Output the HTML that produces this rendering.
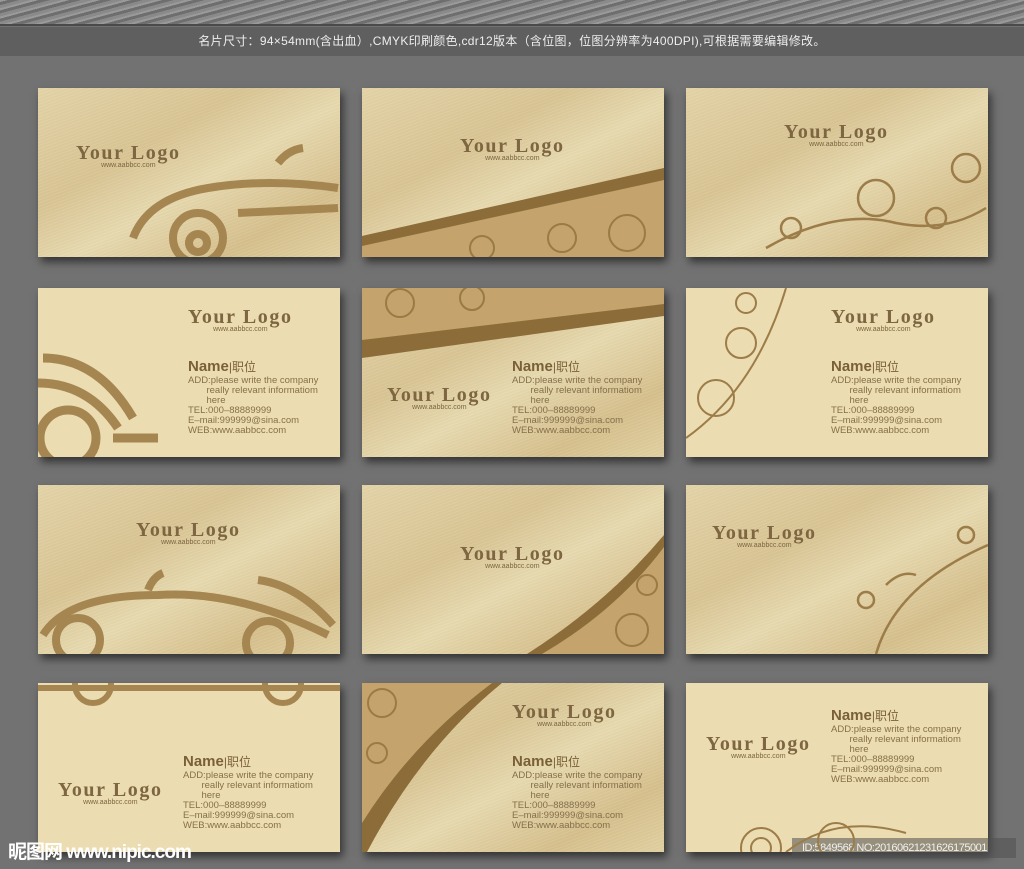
<!DOCTYPE html>
<html><head><meta charset="utf-8"><style>
*{margin:0;padding:0;box-sizing:border-box}
body{width:1024px;height:869px;background:#727272;position:relative;overflow:hidden;font-family:"Liberation Sans","Noto Sans CJK SC",sans-serif}
.top{position:absolute;left:0;top:0;width:1024px;height:26px;background:repeating-linear-gradient(165deg,#9a9a9a 0 2px,#6e6e6e 2px 5px,#8a8a8a 5px 8px);border-bottom:2px solid #4a4a4a}
.bar{position:absolute;left:0;top:27px;width:1024px;height:29px;background:#5f5f5f;color:#eee;font-size:12px;line-height:29px;text-align:center;letter-spacing:0.3px}
.c{position:absolute;width:302px;height:169px;box-shadow:3px 5px 8px rgba(0,0,0,.55);overflow:hidden}
.b{background:linear-gradient(150deg,#e4d4a8 0%,#d9c594 35%,#e8dab0 55%,#d6c08d 80%,#e2d1a2 100%)}
.b::after{content:"";position:absolute;inset:0;background:repeating-linear-gradient(160deg,rgba(255,255,255,.05) 0 1px,rgba(0,0,0,.015) 1px 3px)}
.p{background:#ecdcb1}
.lg{position:absolute;font-family:"Liberation Serif",serif;font-weight:bold;font-size:20px;color:#7d6641;letter-spacing:1.6px;white-space:nowrap;z-index:2}
.lg small{display:block;font-family:"Liberation Sans",sans-serif;font-weight:normal;font-size:7px;text-align:center;letter-spacing:0;margin-top:-3px}
.inf{position:absolute;font-size:9.5px;line-height:10px;color:#856f4a;z-index:2;white-space:nowrap}
.inf b{font-size:15px;color:#7a6038;line-height:17px}
.inf b span{font-size:12px;font-weight:normal}
svg{position:absolute;left:0;top:0;z-index:1}
.wm{position:absolute;left:8px;top:837px;color:#fff;font-size:19px;font-weight:bold;letter-spacing:-1px}
.id{position:absolute;left:792px;top:838px;width:224px;height:20px;background:rgba(80,80,80,.55);color:#f0f0f0;font-size:11px;line-height:20px;padding-left:10px;letter-spacing:-.5px}
</style></head><body>
<div class="top"></div>
<div class="bar">名片尺寸：94×54mm(含出血）,CMYK印刷颜色,cdr12版本（含位图，位图分辨率为400DPI),可根据需要编辑修改。</div>

<!-- row1 -->
<div class="c b" style="left:38px;top:88px">
<div class="lg" style="left:38px;top:54px">Your Logo<small>www.aabbcc.com</small></div>
<svg width="302" height="169"><g fill="none" stroke="#a68650" stroke-width="8"><path d="M95 150 Q110 110 170 100 Q230 90 300 100"/><circle cx="160" cy="150" r="25"/><circle cx="160" cy="155" r="9"/><path d="M240 75 Q250 62 265 60"/><path d="M200 125 L300 120"/></g></svg>
</div>
<div class="c b" style="left:362px;top:88px">
<div class="lg" style="left:98px;top:47px">Your Logo<small>www.aabbcc.com</small></div>
<svg width="302" height="169"><polygon points="0,148 302,80 302,169 0,169" fill="#c4a46c"/><polygon points="0,148 302,80 302,92 0,158" fill="#8c6c38"/><g fill="none" stroke="#9a7a45" stroke-width="2"><circle cx="265" cy="145" r="18"/><circle cx="200" cy="150" r="14"/><circle cx="120" cy="160" r="12"/></g></svg>
</div>
<div class="c b" style="left:686px;top:88px">
<div class="lg" style="left:98px;top:33px">Your Logo<small>www.aabbcc.com</small></div>
<svg width="302" height="169"><g fill="none" stroke="#9c7c48" stroke-width="2.5"><path d="M80 160 Q150 120 210 135 Q260 145 300 120"/><circle cx="190" cy="110" r="18"/><circle cx="250" cy="130" r="10"/><circle cx="280" cy="80" r="14"/><circle cx="105" cy="140" r="10"/></g></svg>
</div>

<!-- row2 -->
<div class="c p" style="left:38px;top:288px">
<div class="lg" style="left:150px;top:18px">Your Logo<small>www.aabbcc.com</small></div>
<div class="inf" style="left:150px;top:70px"><b>Name<span>|职位</span></b><br>ADD:please write the company<br>&nbsp;&nbsp;&nbsp;&nbsp;&nbsp;&nbsp;&nbsp;really relevant informatiom<br>&nbsp;&nbsp;&nbsp;&nbsp;&nbsp;&nbsp;&nbsp;here<br>TEL:000–88889999<br>E–mail:999999@sina.com<br>WEB:www.aabbcc.com</div>
<svg width="302" height="169"><g fill="none" stroke="#a68650" stroke-width="9"><path d="M5 70 Q60 70 95 130"/><path d="M0 95 Q50 95 80 140"/><circle cx="30" cy="150" r="28"/><path d="M75 150 L120 150"/></g></svg>
</div>
<div class="c b" style="left:362px;top:288px">
<div class="lg" style="left:25px;top:96px">Your Logo<small>www.aabbcc.com</small></div>
<div class="inf" style="left:150px;top:70px"><b>Name<span>|职位</span></b><br>ADD:please write the company<br>&nbsp;&nbsp;&nbsp;&nbsp;&nbsp;&nbsp;&nbsp;really relevant informatiom<br>&nbsp;&nbsp;&nbsp;&nbsp;&nbsp;&nbsp;&nbsp;here<br>TEL:000–88889999<br>E–mail:999999@sina.com<br>WEB:www.aabbcc.com</div>
<svg width="302" height="169"><polygon points="0,0 302,0 302,20 0,60" fill="#c4a46c"/><polygon points="0,52 302,16 302,28 0,70" fill="#8c6c38"/><g fill="none" stroke="#9a7a45" stroke-width="2"><circle cx="38" cy="15" r="14"/><circle cx="110" cy="10" r="12"/></g></svg>
</div>
<div class="c p" style="left:686px;top:288px">
<div class="lg" style="left:145px;top:18px">Your Logo<small>www.aabbcc.com</small></div>
<div class="inf" style="left:145px;top:70px"><b>Name<span>|职位</span></b><br>ADD:please write the company<br>&nbsp;&nbsp;&nbsp;&nbsp;&nbsp;&nbsp;&nbsp;really relevant informatiom<br>&nbsp;&nbsp;&nbsp;&nbsp;&nbsp;&nbsp;&nbsp;here<br>TEL:000–88889999<br>E–mail:999999@sina.com<br>WEB:www.aabbcc.com</div>
<svg width="302" height="169"><g fill="none" stroke="#9c7c48" stroke-width="2"><path d="M0 150 Q70 100 100 0"/><circle cx="55" cy="55" r="15"/><circle cx="30" cy="110" r="18"/><circle cx="60" cy="15" r="10"/></g></svg>
</div>

<!-- row3 -->
<div class="c b" style="left:38px;top:485px">
<div class="lg" style="left:98px;top:34px">Your Logo<small>www.aabbcc.com</small></div>
<svg width="302" height="169"><g fill="none" stroke="#a68650" stroke-width="8"><path d="M5 150 Q30 110 120 110 Q200 105 290 150"/><circle cx="40" cy="155" r="22"/><circle cx="230" cy="158" r="22"/><path d="M110 105 Q115 92 125 88"/><path d="M220 95 Q260 100 295 140"/></g></svg>
</div>
<div class="c b" style="left:362px;top:485px">
<div class="lg" style="left:98px;top:58px">Your Logo<small>www.aabbcc.com</small></div>
<svg width="302" height="169"><path d="M170 169 Q250 120 302 55 L302 169Z" fill="#c4a46c"/><path d="M165 169 Q245 118 302 50 L302 62 Q255 125 180 169Z" fill="#8c6c38"/><g fill="none" stroke="#9a7a45" stroke-width="2"><circle cx="270" cy="145" r="16"/><circle cx="285" cy="100" r="10"/></g></svg>
</div>
<div class="c b" style="left:686px;top:485px">
<div class="lg" style="left:26px;top:37px">Your Logo<small>www.aabbcc.com</small></div>
<svg width="302" height="169"><g fill="none" stroke="#9c7c48" stroke-width="2.5"><path d="M190 169 Q210 100 302 60"/><path d="M200 100 Q215 85 230 90"/><circle cx="180" cy="115" r="8"/><circle cx="280" cy="50" r="8"/></g></svg>
</div>

<!-- row4 -->
<div class="c p" style="left:38px;top:683px">
<div class="lg" style="left:20px;top:96px">Your Logo<small>www.aabbcc.com</small></div>
<div class="inf" style="left:145px;top:70px"><b>Name<span>|职位</span></b><br>ADD:please write the company<br>&nbsp;&nbsp;&nbsp;&nbsp;&nbsp;&nbsp;&nbsp;really relevant informatiom<br>&nbsp;&nbsp;&nbsp;&nbsp;&nbsp;&nbsp;&nbsp;here<br>TEL:000–88889999<br>E–mail:999999@sina.com<br>WEB:www.aabbcc.com</div>
<svg width="302" height="169"><g fill="none" stroke="#a68650" stroke-width="6"><path d="M0 5 L302 5"/><circle cx="55" cy="2" r="18"/><circle cx="245" cy="2" r="18"/></g></svg>
</div>
<div class="c b" style="left:362px;top:683px">
<div class="lg" style="left:150px;top:18px">Your Logo<small>www.aabbcc.com</small></div>
<div class="inf" style="left:150px;top:70px"><b>Name<span>|职位</span></b><br>ADD:please write the company<br>&nbsp;&nbsp;&nbsp;&nbsp;&nbsp;&nbsp;&nbsp;really relevant informatiom<br>&nbsp;&nbsp;&nbsp;&nbsp;&nbsp;&nbsp;&nbsp;here<br>TEL:000–88889999<br>E–mail:999999@sina.com<br>WEB:www.aabbcc.com</div>
<svg width="302" height="169"><path d="M0 0 L130 0 Q50 60 0 140Z" fill="#c4a46c"/><path d="M0 140 Q50 60 130 0 L140 0 Q60 65 5 169 L0 169Z" fill="#8c6c38"/><g fill="none" stroke="#9a7a45" stroke-width="2"><circle cx="20" cy="20" r="14"/><circle cx="15" cy="70" r="10"/></g></svg>
</div>
<div class="c p" style="left:686px;top:683px">
<div class="lg" style="left:20px;top:50px">Your Logo<small>www.aabbcc.com</small></div>
<div class="inf" style="left:145px;top:24px"><b>Name<span>|职位</span></b><br>ADD:please write the company<br>&nbsp;&nbsp;&nbsp;&nbsp;&nbsp;&nbsp;&nbsp;really relevant informatiom<br>&nbsp;&nbsp;&nbsp;&nbsp;&nbsp;&nbsp;&nbsp;here<br>TEL:000–88889999<br>E–mail:999999@sina.com<br>WEB:www.aabbcc.com</div>
<svg width="302" height="169"><g fill="none" stroke="#9c7c48" stroke-width="2"><circle cx="75" cy="165" r="20"/><circle cx="75" cy="165" r="10"/><circle cx="150" cy="158" r="18"/><path d="M100 169 Q150 130 220 150"/></g></svg>
</div>

<div class="wm">昵图网 www.nipic.com</div>
<div class="id">ID:5849568 NO:20160621231626175001</div>
</body></html>
